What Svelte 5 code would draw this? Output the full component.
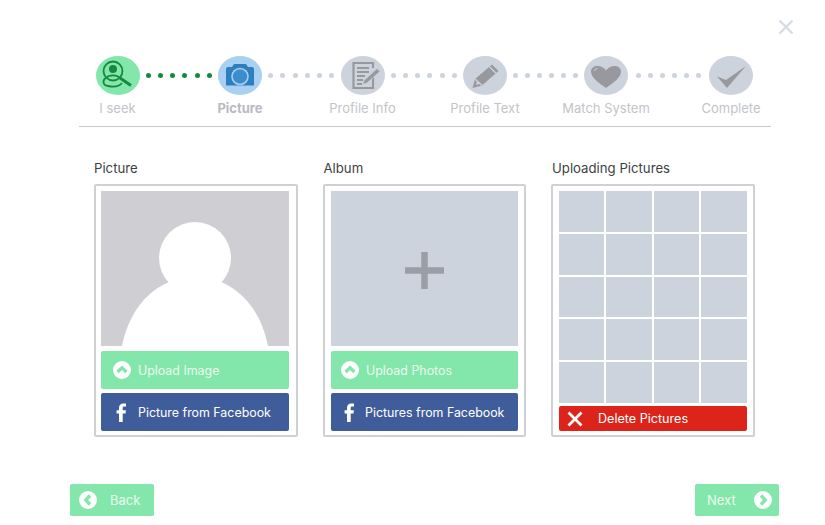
<script>
  const steps = [
    { label: 'I seek', icon: 'seek', state: 'done', gap: 78.5 },
    { label: 'Picture', icon: 'camera', state: 'active', gap: 78.5 },
    { label: 'Profile Info', icon: 'info', state: 'todo', gap: 78.5 },
    { label: 'Profile Text', icon: 'pencil', state: 'todo', gap: 77 },
    { label: 'Match System', icon: 'heart', state: 'todo', gap: 81 },
    { label: 'Complete', icon: 'check', state: 'todo', gap: 0 }
  ];
  const dots = [0, 1, 2, 3, 4, 5];
  const cells = Array.from({ length: 20 }, (_, i) => i);
</script>

{#snippet chevron(points)}
  <svg class="round" width="18" height="18" viewBox="0 0 18 18" aria-hidden="true">
    <circle cx="9" cy="9" r="9" fill="#fff" />
    <polyline {points} fill="none" stroke="#83e6ab" stroke-width="3.4" />
  </svg>
{/snippet}

{#snippet fb()}
  <svg class="fb" width="11" height="19" viewBox="0 0 11 19" aria-hidden="true">
    <path d="M3 19V10.500H.6V7.300H3V5C3 1.900 4.700.4 7.300.4c1.200 0 2.300.1 2.700.2v2.900H8.300C6.900 3.500 6.700 4.200 6.700 5.100v2.200h3.200l-.4 3.200H6.700V19z" fill="#fff" />
  </svg>
{/snippet}

<div class="page">
  <svg class="close" width="16" height="16" viewBox="0 0 16 16" aria-hidden="true">
    <path d="M1.500 1.500l13 13M14.500 1.500l-13 13" stroke="#d6dbe4" stroke-width="2.400" fill="none" />
  </svg>

  <div class="stepper">
    {#each steps as step, i}
      <div class="step {step.state}">
        <div class="bubble">
          <svg width="44" height="39" viewBox="0 0 44 39" aria-hidden="true">
            {#if step.icon === 'seek'}
              <g fill="none" stroke="#15893f" stroke-width="1.800">
                <circle cx="17" cy="15" r="9.500" />
                <path d="M10.500 21.500C6 24 6.500 29 12 30c5 1 11 .5 14-3" />
                <path d="M11 22c1-3.500 11-3.500 12 0" />
              </g>
              <circle cx="17" cy="13" r="4" fill="#15893f" />
              <path d="M24 22l11 7.500" stroke="#15893f" stroke-width="3" />
            {:else if step.icon === 'camera'}
              <path d="M8 13a2 2 0 0 1 2-2h4l2-3h12l2 3h4a2 2 0 0 1 2 2v16.500H8z" fill="#2f7fbe" />
              <circle cx="22" cy="20.500" r="8.800" fill="#a9d0f1" />
              <circle cx="22" cy="20.500" r="7.200" fill="#3b8dcd" />
            {:else if step.icon === 'info'}
              <path d="M32 17v15H12.500V7H32v5" fill="none" stroke="#98999e" stroke-width="2.200" />
              <path d="M16 12h12M16 16h12M16 20h8M16 24h6M16 28h5" stroke="#98999e" stroke-width="1.800" />
              <path d="M23 24.500l13-12 3 3-13 11.500-4.500 1.500z" fill="#98999e" stroke="#cdd3dd" stroke-width=".8" />
            {:else if step.icon === 'pencil'}
              <path d="M9.500 32l2.500-9L29 8.500 35.500 15 19 29.500z" fill="#98999e" />
              <path d="M12 23l7 6.500M26.500 10.700l6.500 6.500" stroke="#cdd3dd" stroke-width="1.300" fill="none" />
              <path d="M13 29l1-4 3 2.800z" fill="#cdd3dd" />
            {:else if step.icon === 'heart'}
              <path d="M22 32C15 27 7 21.500 7 15.500 7 12 10 10 13.500 10c3.500 0 6.500 1.500 8.500 4.500C24 11.500 27 10 30.500 10 34 10 37 12 37 15.500 37 21.500 29 27 22 32z" fill="#98999e" />
              <path d="M10.500 15c.3-1.500 1.300-2.300 3-2.600" stroke="#d5d7db" stroke-width="1" fill="none" />
            {:else}
              <path d="M8 20.500l9 3.500L37 10 18 32z" fill="#98999e" />
            {/if}
          </svg>
        </div>
        <span class="label">{step.label}</span>
      </div>
      {#if i < steps.length - 1}
        <div class="dots" class:green={i === 0} style:width="{step.gap}px">
          {#each dots as d}
            <i></i>
          {/each}
        </div>
      {/if}
    {/each}
  </div>

  <hr class="rule" />

  <div class="columns">
    <section class="picture">
      <h2>Picture</h2>
      <div class="panel">
        <svg class="avatar" width="188" height="155" viewBox="0 0 188 155" aria-hidden="true">
          <rect width="188" height="155" fill="#cfcfd3" />
          <circle cx="94" cy="67" r="36" fill="#fff" />
          <path d="M21 155C30 110 60 86 94 86s64 24 73 69z" fill="#fff" />
        </svg>
        <div class="btn green">{@render chevron('4.500,11 9,6.800 13.500,11')}<span>Upload Image</span></div>
        <div class="btn blue"><span class="fb-slot">{@render fb()}</span><span>Picture from Facebook</span></div>
      </div>
    </section>

    <section class="album">
      <h2>Album</h2>
      <div class="panel">
        <div class="add">
          <svg width="39" height="37" viewBox="0 0 39 37" aria-hidden="true">
            <path d="M0 18.500h39M19.500 0v37" stroke="#9a9ea6" stroke-width="6.500" />
          </svg>
        </div>
        <div class="btn green">{@render chevron('4.500,11 9,6.800 13.500,11')}<span>Upload Photos</span></div>
        <div class="btn blue"><span class="fb-slot">{@render fb()}</span><span>Pictures from Facebook</span></div>
      </div>
    </section>

    <section class="uploads">
      <h2>Uploading Pictures</h2>
      <div class="panel">
        <div class="grid">
          {#each cells as c}
            <i></i>
          {/each}
        </div>
        <div class="btn red">
          <svg width="16" height="16" viewBox="0 0 16 16" aria-hidden="true">
            <path d="M1.500 1.500l13 13M14.500 1.500l-13 13" stroke="#fff" stroke-width="2.800" fill="none" />
          </svg>
          <span>Delete Pictures</span>
        </div>
      </div>
    </section>
  </div>

  <div class="nav">
    <div class="btn green step-btn">{@render chevron('11,4.500 6.800,9 11,13.500')}<span>Back</span></div>
    <div class="btn green step-btn next"><span>Next</span>{@render chevron('7,4.500 11.200,9 7,13.500')}</div>
  </div>
</div>

<style>
  :global(body) {
    margin: 0;
    background: #fff;
  }

  .page {
    position: relative;
    width: 825px;
    height: 525px;
    overflow: hidden;
    padding-top: 56px;
    box-sizing: border-box;
    font-family: Inter, "Open Sans", sans-serif;
  }

  .close {
    position: absolute;
    left: 778px;
    top: 19px;
  }

  .stepper {
    display: flex;
    margin-left: 95.5px;
    height: 62px;
  }

  .step {
    width: 44px;
    flex: none;
    display: flex;
    flex-direction: column;
    align-items: center;
  }

  .bubble {
    width: 44px;
    height: 39px;
    border-radius: 50%;
    background: #cdd3dd;
  }

  .bubble svg {
    display: block;
  }

  .done .bubble {
    background: #83e6ab;
  }

  .active .bubble {
    background: #a9d0f1;
  }

  .label {
    margin-top: 5px;
    font-size: 13px;
    line-height: 16px;
    color: #c2c4c8;
    white-space: nowrap;
  }

  .active .label {
    font-weight: 700;
    color: #b9bbbf;
  }

  .dots {
    flex: none;
    display: flex;
    justify-content: center;
    gap: 7.2px;
    margin-top: 17px;
    height: 5px;
  }

  .dots i {
    width: 5px;
    height: 5px;
    border-radius: 50%;
    background: #cdd3dd;
  }

  .dots.green i {
    background: #15893f;
  }

  .rule {
    margin: 8px 54px 0 79px;
    border: 0;
    border-top: 1px solid #c8c9cb;
  }

  .columns {
    display: grid;
    grid-template-columns: repeat(3, 203.500px);
    column-gap: 25px;
    margin: 33px 0 0 94px;
  }

  h2 {
    margin: 0 0 8px;
    font-size: 13.2px;
    line-height: 16px;
    font-weight: 400;
    color: #3c3f44;
  }

  .album h2,
  .uploads h2 {
    margin-left: 1px;
  }

  .panel {
    box-sizing: border-box;
    height: 253px;
    padding: 5px 6px 4px;
    border: 2px solid #cfd0d3;
    border-radius: 2px;
    display: flex;
    flex-direction: column;
    gap: 4px;
  }

  .picture .panel {
    padding-left: 5px;
    padding-right: 7px;
  }

  .avatar {
    display: block;
    flex: none;
    width: 188px;
    height: 155px;
    margin-bottom: 1px;
  }

  .add {
    box-sizing: border-box;
    flex: none;
    height: 155px;
    margin-bottom: 1px;
    padding-top: 3px;
    background: #cdd3dd;
    display: flex;
    align-items: center;
    justify-content: center;
  }

  .btn {
    display: flex;
    align-items: center;
    height: 38px;
    border-radius: 2px;
    color: #fff;
    font-size: 12.4px;
    flex: none;
  }

  .btn.green {
    background: #83e6ab;
    color: #eafaf0;
    padding-left: 11.500px;
    gap: 7.500px;
  }

  .btn.blue {
    background: #3f5d9a;
    padding-left: 11.500px;
    gap: 7.500px;
  }

  .round {
    flex: none;
  }

  .fb-slot {
    width: 18px;
    display: flex;
    justify-content: center;
  }

  .album .btn.green {
    padding-left: 10px;
    gap: 7.500px;
  }

  .album .btn.blue {
    padding-left: 10px;
    gap: 6.500px;
  }

  .grid {
    display: grid;
    flex: none;
    grid-template-columns: repeat(4, 1fr);
    grid-template-rows: repeat(5, 1fr);
    gap: 2px;
    height: 212px;
    margin-bottom: -1px;
  }

  .grid i {
    background: #cdd3dd;
  }

  .btn.red {
    height: 25px;
    font-size: 12.6px;
    background: #dc241b;
    padding-left: 8px;
    gap: 15px;
  }

  .nav {
    display: flex;
    justify-content: space-between;
    width: 709px;
    margin: 47px 0 0 70px;
  }

  .btn.green.step-btn {
    box-sizing: border-box;
    width: 84px;
    height: 32px;
    font-size: 13px;
    padding-left: 9px;
    gap: 13px;
  }

  .btn.green.step-btn.next {
    padding-left: 12px;
    padding-right: 7px;
    justify-content: space-between;
    gap: 0;
  }
</style>
